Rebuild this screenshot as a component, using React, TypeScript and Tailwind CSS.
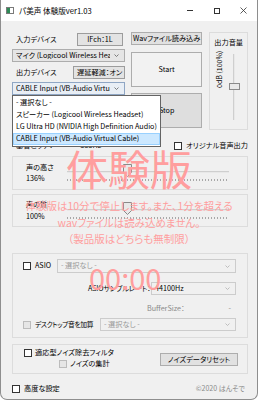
import React from "react";

function Chevron({ color = "#606060" }: { color?: string }) {
  return (
    <svg width="5" height="3" viewBox="0 0 5 3" className="shrink-0">
      <path d="M0.5 0.5 L2.5 2.5 L4.5 0.5" fill="none" stroke={color} strokeWidth="0.8" />
    </svg>
  );
}

function Combo({
  text,
  className = "",
  disabled = false,
  focus = false,
}: {
  text: string;
  className?: string;
  disabled?: boolean;
  focus?: boolean;
}) {
  const look = disabled
    ? "border-[#cccccc] bg-[#f0f0f0] text-[#9a9a9a]"
    : focus
      ? "border-[#8fa6c4] bg-[#e8eef5]"
      : "border-[#adadad] bg-[#e5e5e5]";
  return (
    <div className={`flex items-center justify-between gap-1 border pl-[3px] pr-[5px] ${look} ${className}`}>
      <span className="overflow-hidden whitespace-nowrap">{text}</span>
      <Chevron color={disabled ? "#b0b0b0" : "#606060"} />
    </div>
  );
}

function Check({ disabled = false }: { disabled?: boolean }) {
  return (
    <span
      className={`block h-[8px] w-[8px] shrink-0 border ${disabled ? "border-[#bcbcbc] bg-[#e6e6e6]" : "border-[#333333] bg-white"}`}
    />
  );
}

function Thumb() {
  return (
    <svg width="9" height="13" viewBox="0 0 9 13" className="absolute top-0">
      <path d="M0.5 0.5 H8.5 V8.5 L4.5 12.5 L0.5 8.5 Z" fill="#e9e9e9" stroke="#8a8a8a" strokeWidth="1" />
    </svg>
  );
}

function SliderGroup({ label, value, className = "" }: { label: string; value: string; className?: string }) {
  return (
    <div className={`flex items-center border border-[#dcdcdc] ${className}`}>
      <div className="flex w-[54px] flex-col gap-[4px] pl-[13px]">
        <span>{label}</span>
        <span>{value}</span>
      </div>
      <div className="relative h-[14px] w-[162px]">
        <div className="absolute left-0 right-0 top-[5px] h-[2px] border-t border-[#cfcfcf] bg-[#e8e8e8]" />
        <div className="absolute left-0 right-0 top-[13px] h-[2px] bg-[repeating-linear-gradient(90deg,#a8a8a8_0_1px,transparent_1px_3px)]" />
        <div className="absolute left-[56px] top-[-2px]">
          <Thumb />
        </div>
      </div>
    </div>
  );
}

export default function App() {
  return (
    <div className="relative flex h-[400px] w-[258px] flex-col overflow-hidden rounded-b-[7px] border-x border-b border-[#8e8e8e] bg-[#f0f0f0] font-['Noto_Sans_CJK_JP',sans-serif] text-[7.2px] leading-none text-black [font-feature-settings:'palt']">
      {/* title bar */}
      <div className="flex h-[21px] shrink-0 items-center bg-white">
        <div className="ml-[5px] flex h-[7px] w-[8px] items-stretch border border-[#7a7a7a] bg-white">
          <div className="w-[3px] bg-[#2e8b57]" />
        </div>
        <span className="ml-[5px] text-[7.6px]">パ美声 体験版ver1.03</span>
        <div className="ml-auto flex h-full">
          <div className="flex w-[27px] items-center justify-center">
            <div className="h-px w-[6px] bg-[#333]" />
          </div>
          <div className="flex w-[27px] items-center justify-center">
            <div className="h-[6px] w-[6px] border border-[#333]" />
          </div>
          <div className="flex w-[27px] items-center justify-center">
            <svg width="7" height="7" viewBox="0 0 7 7">
              <path d="M0.5 0.5 L6.5 6.5 M6.5 0.5 L0.5 6.5" stroke="#333" strokeWidth="0.8" />
            </svg>
          </div>
        </div>
      </div>

      {/* content */}
      <div className="flex flex-1 flex-col whitespace-nowrap pl-[11px] pr-[9px] pt-[9px]">
        <div className="flex h-[100px]">
          <div className="flex w-[113px] flex-col pt-[3px]">
            <div className="flex h-[13px] items-center">
              <span className="pl-[4px]">入力デバイス</span>
              <div className="ml-auto mr-[2px] flex h-[13px] w-[46px] items-center justify-center border border-[#9c9c9c] bg-[#e3e3e3]">
                IFch：1L
              </div>
            </div>
            <Combo text="マイク (Logicool Wireless Heac" className="mt-[3px] h-[13px]" />
            <div className="mt-[4px] flex h-[13px] items-center">
              <span className="pl-[4px]">出力デバイス</span>
              <div className="ml-auto flex h-[13px] w-[52px] items-center justify-start overflow-hidden border border-[#9c9c9c] bg-[#e3e3e3] pl-[3px]">
                遅延軽減：オン
              </div>
            </div>
            <Combo text="CABLE Input (VB-Audio Virtua" focus className="mt-[3px] h-[13px]" />
          </div>

          <div className="ml-[6px] flex w-[72px] flex-col">
            <div className="mt-[2px] flex h-[13px] items-center justify-center border border-[#adadad] bg-[#e1e1e1]">
              Wavファイル読み込み
            </div>
            <div className="mt-[7px] flex h-[35px] items-center justify-center border border-[#adadad] bg-[#f2f2f2]">
              Start
            </div>
            <div className="mt-[6px] flex h-[35px] items-center justify-center border border-[#adadad] bg-[#dedede]">
              Stop
            </div>
          </div>

          <div className="ml-[7px] mt-[2px] flex w-[39px] flex-col items-center border border-[#dcdcdc]">
            <span className="mt-[6px]">出力音量</span>
            <div className="mt-[8px] flex h-[66px] w-full">
              <span className="ml-[6px] mt-[-2px] h-[36px] text-[7px] [writing-mode:vertical-rl] rotate-180">
                0dB (100%)
              </span>
              <div className="relative ml-auto mr-[7px] h-full w-[11px]">
                <div className="absolute left-[4px] top-0 h-full w-[2px] border-l border-[#cfcfcf] bg-[#e8e8e8]" />
                <div className="absolute left-0 top-[29px] h-[7px] w-[11px] border border-[#8a8a8a] bg-[#e9e9e9]" />
              </div>
            </div>
          </div>
        </div>

        <div className="mt-[10px] flex h-[11px] items-center">
          <span className="w-[69px] pl-[4px]">基音ピッチ：</span>
          <span>355Hz</span>
          <div className="ml-[73px] flex items-center gap-[4px]">
            <Check />
            <span>オリジナル音声出力</span>
          </div>
        </div>

        <SliderGroup label="声の高さ" value="136%" className="mt-[5px] h-[34px]" />
        <SliderGroup label="声の質" value="100%" className="mt-[4px] h-[33px]" />

        <div className="mt-[26px] flex h-[85px] flex-col border border-[#dcdcdc] pl-[10px] pr-[11px]">
          <div className="mt-[5px] flex h-[14px] items-center">
            <Check />
            <span className="ml-[4px] w-[22px]">ASIO</span>
            <Combo text="- 選択なし -" disabled className="h-[14px] min-w-0 flex-1" />
          </div>
          <div className="mt-[9px] flex h-[13px] items-center">
            <span className="ml-[65px] w-[63px] tracking-[-0.2px]">ASIOサンプルレート：</span>
            <Combo text="44100Hz" disabled className="h-[13px] min-w-0 flex-1 !text-black" />
          </div>
          <div className="mt-[9px] flex h-[10px] items-center text-[#8a8a8a]">
            <span className="ml-[124px]">BufferSize：</span>
            <span className="ml-auto mr-[5px]">-</span>
          </div>
          <div className="mt-[4px] flex h-[13px] items-center">
            <Check disabled />
            <span className="ml-[4px] w-[65px] text-[6.8px] tracking-[-0.4px]">デスクトップ音を加算</span>
            <Combo text="- 選択なし -" disabled className="h-[13px] min-w-0 flex-1" />
          </div>
        </div>

        <div className="mt-[6px] flex h-[30px] border border-[#dcdcdc]">
          <div className="flex flex-col pl-[11px] pt-[4px]">
            <div className="flex items-center gap-[3px]">
              <Check />
              <span>適応型ノイズ除去フィルタ</span>
            </div>
            <div className="ml-[35px] mt-[3px] flex items-center gap-[3px]">
              <Check disabled />
              <span>ノイズの集計</span>
            </div>
          </div>
          <div className="ml-auto mr-[9px] mt-[8px] flex h-[13px] w-[78px] items-center justify-center border border-[#adadad] bg-[#e1e1e1]">
            ノイズデータリセット
          </div>
        </div>

        <div className="mt-[9px] flex h-[11px] items-center">
          <Check />
          <span className="ml-[4px]">高度な設定</span>
          <span className="ml-auto mr-[3px] text-[7px] text-[#8a8a8a]">©2020 はんそで</span>
        </div>
      </div>

      {/* open dropdown list */}
      <div className="absolute left-[11px] top-[95px] flex w-[149px] flex-col whitespace-nowrap border border-[#646464] bg-white py-px">
        <div className="flex h-[12px] items-center pl-[3px]">- 選択なし -</div>
        <div className="flex h-[12px] items-center pl-[3px]">スピーカー (Logicool Wireless Headset)</div>
        <div className="flex h-[12px] items-center pl-[3px]">LG Ultra HD (NVIDIA High Definition Audio)</div>
        <div className="flex h-[12px] items-center border border-[#99d1ff] bg-[#cce8ff] pl-[2px]">
          CABLE Input (VB-Audio Virtual Cable)
        </div>
      </div>

      {/* trial watermark */}
      <div className="pointer-events-none absolute left-0 right-0 top-[147px] flex flex-col items-center whitespace-nowrap text-[#ff9e9e]">
        <span className="text-[42px] leading-none [font-feature-settings:normal]">体験版</span>
        <span className="mt-[12px] text-[10.5px] leading-none">体験版は10分で停止します。また、1分を超える</span>
        <span className="mt-[6px] text-[10.5px] leading-none">wavファイルは読み込めません。</span>
        <span className="mt-[6px] text-[10.5px] leading-none">（製品版はどちらも無制限）</span>
      </div>
      <div className="pointer-events-none absolute left-[88px] top-[263px] text-[29px] leading-none text-[#ff9e9e]">
        00:00
      </div>
    </div>
  );
}
